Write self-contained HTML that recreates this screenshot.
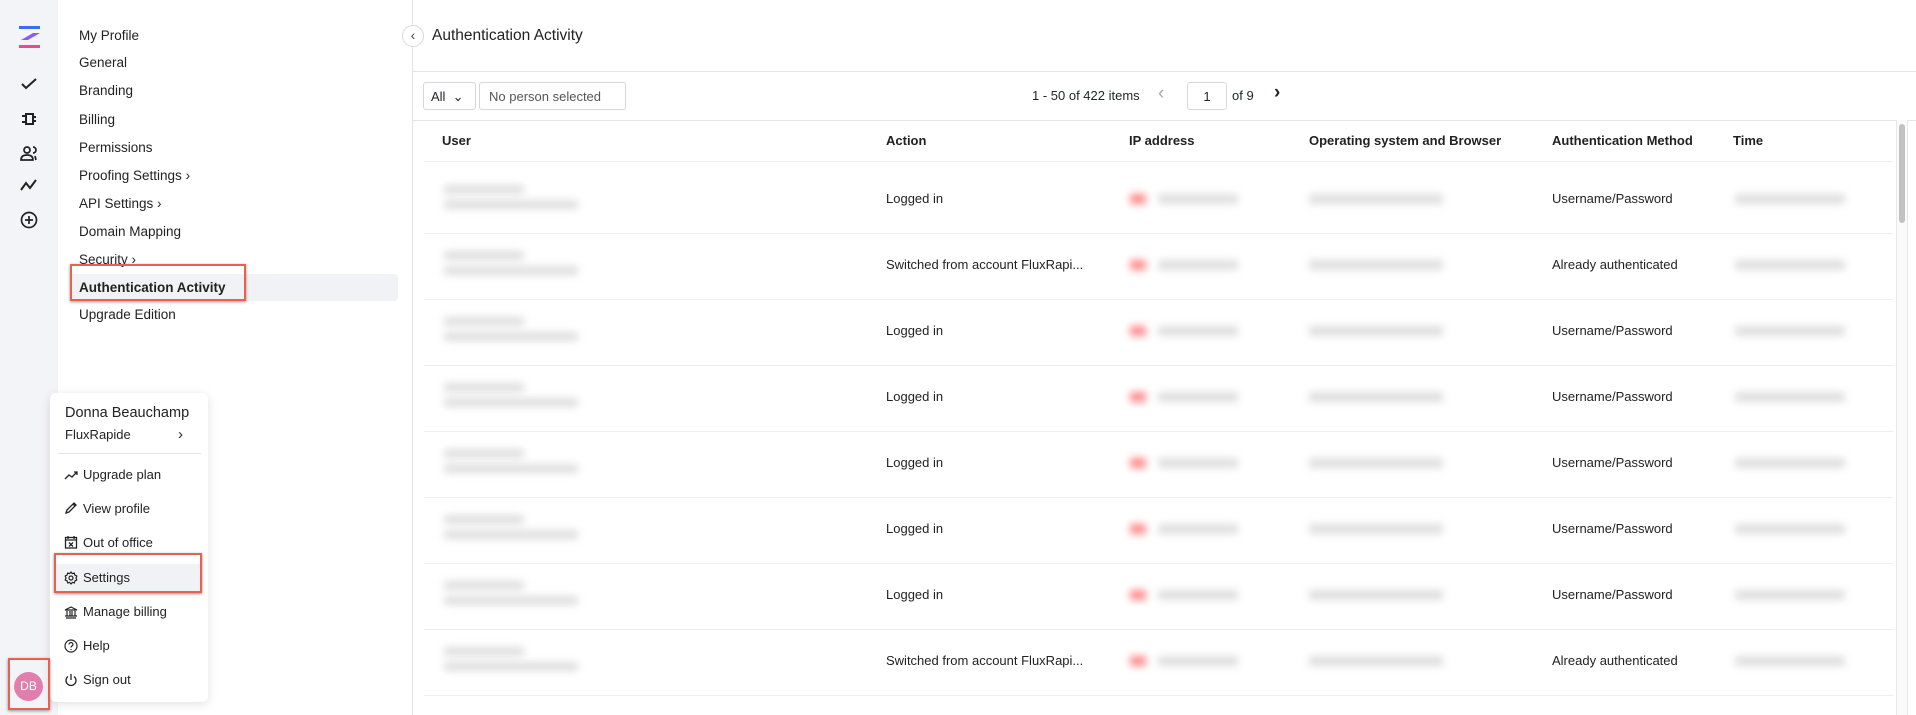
<!DOCTYPE html>
<html><head><meta charset="utf-8"><style>
*{box-sizing:border-box;margin:0;padding:0}
body{width:1916px;height:715px;overflow:hidden;background:#fff;font-family:"Liberation Sans",sans-serif;color:#1f2328;position:relative}
.abs{position:absolute}
.rail{left:0;top:0;width:58px;height:715px;background:#f3f4f8}
.nav{left:58px;top:0;width:355px;height:715px;background:#fff;border-right:1px solid #e3e4e8}
.nav div{position:absolute;left:21px;font-size:13.5px;color:#222}
.redbox{border:2px solid #e8604f;box-shadow:0 1px 3px rgba(0,0,0,.4)}
.th{font-size:13px;font-weight:bold;top:133px;color:#222}
.td{font-size:13px;color:#222}
.sep{left:424px;width:1470px;height:1px;background:#eeeff2}
.blur{background:#c4c4c4;filter:blur(4px);border-radius:2px;opacity:.55}
.menu{left:50px;top:393px;width:158px;height:309px;background:#fff;border-radius:6px;box-shadow:0 2px 10px rgba(0,0,0,.12)}
.mi{position:absolute;left:33px;font-size:13px;color:#222}
.ic{position:absolute;left:14px;width:14px;height:14px}
</style></head><body>
<div class="abs rail"></div>
<svg class="abs" style="left:18px;top:26px" width="23" height="22" viewBox="0 0 23 22"><rect x="1" y="0" width="21" height="3" fill="#3b6cf5"/><path d="M15 7 L22 7 L10 14 L3 14Z" fill="#8a5cf0"/><rect x="1" y="19" width="21" height="3" fill="#e8498f"/></svg>
<svg class="abs" style="left:20px;top:77px" width="18" height="14" viewBox="0 0 18 14" fill="none" stroke="#222" stroke-width="2"><path d="M2 7 L6 11 L16 2"/></svg>
<svg class="abs" style="left:20px;top:112px" width="18" height="14" viewBox="0 0 18 14" fill="none" stroke="#222" stroke-width="2"><path d="M2 4h4M2 10h4M6 2h7v10H6zM13 5h3M13 9h3"/></svg>
<svg class="abs" style="left:20px;top:145px" width="18" height="16" viewBox="0 0 18 16" fill="none" stroke="#222" stroke-width="1.7"><circle cx="7" cy="5" r="3"/><path d="M1 15c0-4 3-5 6-5s6 1 6 5zM13 2a3 3 0 010 6M15 11l1 4"/></svg>
<svg class="abs" style="left:20px;top:178px" width="18" height="14" viewBox="0 0 18 14" fill="none" stroke="#222" stroke-width="2"><path d="M1 12 L6 5 L10 10 L16 2"/></svg>
<svg class="abs" style="left:20px;top:211px" width="18" height="18" viewBox="0 0 18 18" fill="none" stroke="#222" stroke-width="1.7"><circle cx="9" cy="9" r="7.5"/><path d="M9 5v8M5 9h8"/></svg>

<div class="abs nav">
<div class="abs" style="left:12px;top:274px;width:328px;height:27px;background:#f1f2f5;border-radius:4px"></div>
<div style="top:28px">My Profile</div>
<div style="top:55px">General</div>
<div style="top:83px">Branding</div>
<div style="top:112px">Billing</div>
<div style="top:140px">Permissions</div>
<div style="top:168px">Proofing Settings &#8250;</div>
<div style="top:196px">API Settings &#8250;</div>
<div style="top:224px">Domain Mapping</div>
<div style="top:252px">Security &#8250;</div>
<div style="top:280px;font-weight:bold">Authentication Activity</div>
<div style="top:307px">Upgrade Edition</div>
</div>
<div class="abs redbox" style="left:70px;top:264px;width:176px;height:37px"></div>
<div class="abs" style="left:402px;top:25px;width:22px;height:22px;border:1px solid #d8d9de;border-radius:50%;background:#fff;font-size:14px;text-align:center;line-height:19px;color:#444">&#8249;</div>

<div class="abs" style="left:432px;top:27px;font-size:15.5px;color:#222">Authentication Activity</div>
<div class="abs" style="left:413px;top:71px;width:1503px;height:1px;background:#e3e4e8"></div>
<div class="abs" style="left:423px;top:82px;width:53px;height:28px;border:1px solid #d6d7dc;border-radius:3px;font-size:13px;padding:6px 0 0 7px">All &nbsp;&#8964;</div>
<div class="abs" style="left:479px;top:82px;width:147px;height:28px;border:1px solid #d6d7dc;border-radius:3px;font-size:13px;padding:6px 0 0 9px;color:#555">No person selected</div>
<div class="abs" style="left:1032px;top:88px;font-size:13px">1 - 50 of 422 items</div>
<div class="abs" style="left:1158px;top:83px;font-size:19px;color:#aaa">&#8249;</div>
<div class="abs" style="left:1187px;top:82px;width:40px;height:28px;border:1px solid #d6d7dc;border-radius:3px;font-size:13px;text-align:center;padding-top:6px">1</div>
<div class="abs" style="left:1232px;top:88px;font-size:13px">of 9</div>
<div class="abs" style="left:1274px;top:82px;font-size:19px;font-weight:bold">&#8250;</div>
<div class="abs" style="left:413px;top:120px;width:1503px;height:1px;background:#e3e4e8"></div>

<div class="abs th" style="left:442px">User</div>
<div class="abs th" style="left:886px">Action</div>
<div class="abs th" style="left:1129px">IP address</div>
<div class="abs th" style="left:1309px">Operating system and Browser</div>
<div class="abs th" style="left:1552px">Authentication Method</div>
<div class="abs th" style="left:1733px">Time</div>
<div class="abs sep" style="top:161px"></div>

<div id="rows"></div>
<script>
var acts=["Logged in","Switched from account FluxRapi...","Logged in","Logged in","Logged in","Logged in","Logged in","Switched from account FluxRapi..."];
var meth=["Username/Password","Already authenticated","Username/Password","Username/Password","Username/Password","Username/Password","Username/Password","Already authenticated"];
var h="";
for(var i=0;i<8;i++){var c=199+i*66;
h+='<div class="abs blur" style="left:444px;top:'+(c-14)+'px;width:80px;height:9px"></div>';
h+='<div class="abs blur" style="left:444px;top:'+(c+1)+'px;width:134px;height:9px"></div>';
h+='<div class="abs td" style="left:886px;top:'+(c-8)+'px">'+acts[i]+'</div>';
h+='<div class="abs blur" style="left:1130px;top:'+(c-5)+'px;width:16px;height:10px;background:#f55;opacity:.7"></div>';
h+='<div class="abs blur" style="left:1158px;top:'+(c-5)+'px;width:80px;height:10px"></div>';
h+='<div class="abs blur" style="left:1309px;top:'+(c-5)+'px;width:134px;height:10px"></div>';
h+='<div class="abs td" style="left:1552px;top:'+(c-8)+'px">'+meth[i]+'</div>';
h+='<div class="abs blur" style="left:1735px;top:'+(c-5)+'px;width:110px;height:10px"></div>';
h+='<div class="abs sep" style="top:'+(c+34)+'px"></div>';}
document.getElementById("rows").innerHTML=h;
</script>
<div class="abs" style="left:1896px;top:120px;width:12px;height:595px;border-left:1px solid #e8e8ea;border-right:1px solid #e8e8ea;background:#fafafa"></div>
<div class="abs" style="left:1899px;top:124px;width:6px;height:99px;background:#c2c2c2;border-radius:3px"></div>

<div class="abs menu">
<div class="mi" style="left:15px;top:12px;font-size:14.5px">Donna Beauchamp</div>
<div class="mi" style="left:15px;top:34px;font-size:13px">FluxRapide</div>
<div class="mi" style="left:128px;top:33px;font-size:15px">&#8250;</div>
<div class="abs" style="left:8px;top:60px;width:143px;height:1px;background:#e3e4e8"></div>
<svg class="ic" style="top:75px" viewBox="0 0 14 14" fill="none" stroke="#222" stroke-width="1.3"><path d="M1 11l4-4 3 2 5-5M10 4h3v3"/></svg>
<div class="mi" style="top:74px">Upgrade plan</div>
<svg class="ic" style="top:108px" viewBox="0 0 14 14" fill="none" stroke="#222" stroke-width="1.3"><path d="M2 12l1-3 7-7 2 2-7 7zM9 3l2 2"/></svg>
<div class="mi" style="top:108px">View profile</div>
<svg class="ic" style="top:142px" viewBox="0 0 14 14" fill="none" stroke="#222" stroke-width="1.3"><rect x="1.5" y="2.5" width="11" height="10.5"/><path d="M1.5 5h11M4 1v3M10 1v3M5 7.5l4 4M9 7.5l-4 4"/></svg>
<div class="mi" style="top:142px">Out of office</div>
<div class="abs" style="left:6px;top:171px;width:146px;height:30px;background:#f1f2f5"></div>
<svg class="ic" style="top:178px" viewBox="0 0 14 14" fill="none" stroke="#222" stroke-width="1.2"><circle cx="7" cy="7" r="2"/><path d="M7 1l1.3 1.6 2-.5.5 2L12.8 5 12 7l.8 2-1.9.9-.5 2-2-.5L7 13l-1.3-1.6-2 .5-.5-2L1.2 9 2 7l-.8-2 1.9-.9.5-2 2 .5z"/></svg>
<div class="mi" style="top:177px">Settings</div>
<svg class="ic" style="top:212px" viewBox="0 0 14 14" fill="none" stroke="#222" stroke-width="1.2"><path d="M1 5l6-3 6 3zM2 13h10M1 11h12M3 6v5M6 6v5M8 6v5M11 6v5"/></svg>
<div class="mi" style="top:211px">Manage billing</div>
<svg class="ic" style="top:246px" viewBox="0 0 14 14" fill="none" stroke="#222" stroke-width="1.2"><circle cx="7" cy="7" r="6"/><path d="M5 5.5a2 2 0 114 0c0 1.3-2 1.5-2 3M7 10v1"/></svg>
<div class="mi" style="top:245px">Help</div>
<svg class="ic" style="top:280px" viewBox="0 0 14 14" fill="none" stroke="#222" stroke-width="1.3"><path d="M7 1v6M4 3.5a5 5 0 106 0"/></svg>
<div class="mi" style="top:279px">Sign out</div>
</div>
<div class="abs redbox" style="left:54px;top:553px;width:148px;height:40px"></div>

<div class="abs" style="left:14px;top:672px;width:29px;height:29px;border-radius:50%;background:#e07fad;color:#fff;font-size:12px;text-align:center;line-height:29px">DB</div>
<div class="abs redbox" style="left:8px;top:658px;width:42px;height:52px"></div>
</body></html>
